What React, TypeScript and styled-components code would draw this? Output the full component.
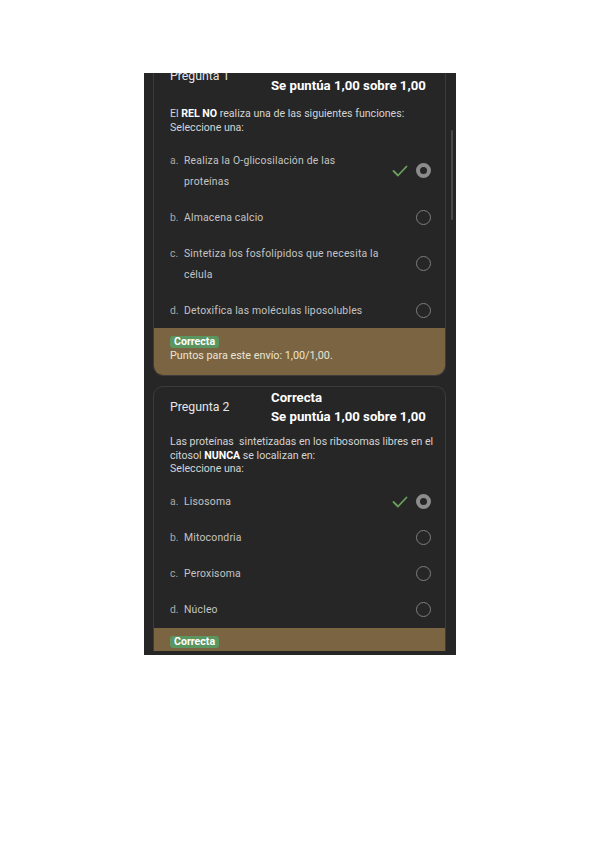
import React from 'react'
import styled, { createGlobalStyle } from 'styled-components'

const GlobalStyle = createGlobalStyle`
  html, body {
    margin: 0;
    padding: 0;
    background: #ffffff;
  }
  body {
    font-family: Roboto, "Noto Sans", "Liberation Sans", sans-serif;
  }
`

interface Option {
  letter: string
  lines: string[]
  selected?: boolean
}

interface Question {
  number: number
  text: React.ReactNode
  options: Option[]
  points?: string
}

const questions: Question[] = [
  {
    number: 1,
    text: (
      <>
        El <b>REL NO</b> realiza una de las siguientes funciones:
      </>
    ),
    options: [
      { letter: 'a.', lines: ['Realiza la O-glicosilación de las', 'proteínas'], selected: true },
      { letter: 'b.', lines: ['Almacena calcio'] },
      { letter: 'c.', lines: ['Sintetiza los fosfolípidos que necesita la', 'célula'] },
      { letter: 'd.', lines: ['Detoxifica las moléculas liposolubles'] },
    ],
    points: 'Puntos para este envío: 1,00/1,00.',
  },
  {
    number: 2,
    text: (
      <>
        Las proteínas&nbsp; sintetizadas en los ribosomas libres en el
        <br />
        citosol <b>NUNCA</b> se localizan en:
      </>
    ),
    options: [
      { letter: 'a.', lines: ['Lisosoma'], selected: true },
      { letter: 'b.', lines: ['Mitocondria'] },
      { letter: 'c.', lines: ['Peroxisoma'] },
      { letter: 'd.', lines: ['Núcleo'] },
    ],
  },
]

const Check = () => (
  <svg width="16" height="12" viewBox="0 0 16 12">
    <polyline points="1.5,6 6,10.5 14.5,1.5" fill="none" stroke="#6a9f5c" strokeWidth="1.8" strokeLinecap="round" strokeLinejoin="round" />
  </svg>
)

const App: React.FC = () => {
  return (
    <>
      <GlobalStyle />
      <Page>
        <Screen>
          <Scroll>
            {questions.map((q, i) => (
              <Card key={q.number}>
                <Header>
                  <QLabel>Pregunta {q.number}</QLabel>
                  <Status>
                    <div>Correcta</div>
                    <div>Se puntúa 1,00 sobre 1,00</div>
                  </Status>
                </Header>
                <Prompt $top={i === 0 ? 12 : 9}>
                  {q.text}
                  <br />
                  Seleccione una:
                </Prompt>
                <Options>
                  {q.options.map((o) => (
                    <OptionRow key={o.letter}>
                      <Letter>{o.letter}</Letter>
                      <OptionText>
                        {o.lines.map((l) => (
                          <div key={l}>{l}</div>
                        ))}
                      </OptionText>
                      <Marks>
                        {o.selected && <Check />}
                        <Radio $checked={!!o.selected} />
                      </Marks>
                    </OptionRow>
                  ))}
                </Options>
                <Feedback>
                  <Badge>Correcta</Badge>
                  {q.points && <Points>{q.points}</Points>}
                </Feedback>
              </Card>
            ))}
          </Scroll>
          <ScrollThumb />
        </Screen>
      </Page>
    </>
  )
}

const Page = styled.div`
  width: 600px;
  height: 848px;
  padding: 73px 0 0 144px;
  box-sizing: border-box;
`

const Screen = styled.div`
  position: relative;
  width: 312px;
  height: 582px;
  box-sizing: border-box;
  border-bottom: 4px solid #262626;
  background: #262626;
  overflow: hidden;
`

const Scroll = styled.div`
  display: flex;
  flex-direction: column;
  gap: 10px;
  margin-top: -18px;
  padding: 0 10px 0 9px;
`

const ScrollThumb = styled.div`
  position: absolute;
  top: 57px;
  right: 3px;
  width: 2px;
  height: 90px;
  border-radius: 1px;
  background: #4a4a4a;
`

const Card = styled.div`
  border: 1px solid #3c3c3c;
  border-radius: 10px;
  overflow: hidden;
  display: flex;
  flex-direction: column;
`

const Header = styled.div`
  display: flex;
  align-items: center;
  padding: 1px 16px 0 16px;
`

const QLabel = styled.div`
  width: 101px;
  font-size: 12.3px;
  color: #e6e6e6;
`

const Status = styled.div`
  font-size: 13.2px;
  font-weight: 700;
  line-height: 19px;
  color: #ffffff;
`

const Prompt = styled.div<{ $top: number }>`
  padding: ${(p) => p.$top}px 8px 0 16px;
  font-size: 10.6px;
  line-height: 13.5px;
  color: #d4d4d4;
  white-space: nowrap;
  b {
    color: #ffffff;
    font-weight: 700;
  }
`

const Options = styled.div`
  display: flex;
  flex-direction: column;
  padding-top: 8px;
`

const OptionRow = styled.div`
  display: flex;
  align-items: center;
  padding: 7.5px 14px 7.5px 16px;
  font-size: 10.4px;
  line-height: 21px;
  color: #c4c4c4;
`

const Letter = styled.div`
  width: 14px;
  align-self: flex-start;
  color: #a8a8a8;
`

const OptionText = styled.div`
  flex: 1;
  letter-spacing: 0.2px;
`

const Marks = styled.div`
  display: flex;
  align-items: center;
  gap: 8px;
`

const Radio = styled.div<{ $checked: boolean }>`
  width: 15px;
  height: 15px;
  box-sizing: border-box;
  border-radius: 50%;
  border: ${(p) => (p.$checked ? '4px solid #8c8c8c' : '1px solid #7e7e7e')};
  background: #262626;
`

const Feedback = styled.div`
  background: #7a6442;
  padding: 8px 16px 12px 16px;
  display: flex;
  flex-direction: column;
  align-items: flex-start;
  gap: 1px;
`

const Badge = styled.span`
  background: #5b9660;
  color: #ffffff;
  font-size: 10.6px;
  font-weight: 700;
  line-height: 12px;
  padding: 0 4px;
  border-radius: 3px;
`

const Points = styled.div`
  font-size: 10.8px;
  line-height: 14px;
  color: #ece4d4;
`

export default App
